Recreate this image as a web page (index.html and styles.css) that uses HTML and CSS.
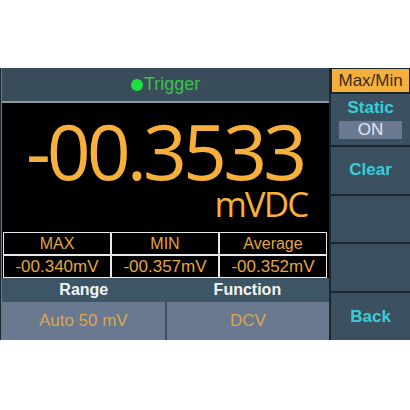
FILE: index.html
```html
<!DOCTYPE html>
<html>
<head>
<meta charset="utf-8">
<link rel="stylesheet" href="styles.css">
</head>
<body>
<div class="device">
  <div class="left">
    <div class="header"><span class="dot"></span><span class="trig">Trigger</span></div>
    <div class="display">
      <div class="reading">-00.3533</div>
      <div class="unit">mVDC</div>
    </div>
    <div class="stats">
      <div class="cell lbl">MAX</div>
      <div class="cell lbl">MIN</div>
      <div class="cell lbl">Average</div>
      <div class="cell val">-00.340mV</div>
      <div class="cell val">-00.357mV</div>
      <div class="cell val">-00.352mV</div>
    </div>
    <div class="fnhead">
      <div class="fcol">Range</div>
      <div class="fcol">Function</div>
    </div>
    <div class="fnvals">
      <div class="fval">Auto 50 mV</div>
      <div class="fval">DCV</div>
    </div>
  </div>
  <div class="right">
    <div class="title">Max/Min</div>
    <div class="panel static">
      <div class="ptext">Static</div>
      <div class="onbox">ON</div>
    </div>
    <div class="panel"><div class="ptext">Clear</div></div>
    <div class="panel"></div>
    <div class="panel"></div>
    <div class="panel"><div class="ptext">Back</div></div>
  </div>
</div>
</body>
</html>
```
FILE: styles.css
```css
html, body {
  margin: 0;
  padding: 0;
  background: #ffffff;
}
body {
  font-family: "Liberation Sans", Arial, sans-serif;
}
.device {
  margin-top: 68px;
  width: 410px;
  height: 272px;
  display: flex;
  background: #1b272f;
}
.left {
  width: 328px;
  margin-left: 1px;
  border-left: 1px solid #6f7a83;
  display: flex;
  flex-direction: column;
}
.header {
  height: 33px;
  background: #394c59;
  border-bottom: 2px solid #8c969e;
  display: flex;
  align-items: center;
  justify-content: center;
}
.dot {
  width: 12px;
  height: 12px;
  border-radius: 50%;
  background: #1fe040;
  margin-right: 1px;
}
.trig {
  color: #3cc050;
  font-size: 18px;
}
.display {
  height: 129px;
  background: #000000;
  display: flex;
  flex-direction: column;
  align-items: flex-end;
  padding-right: 22px;
  box-sizing: border-box;
  padding-top: 13px;
}
.reading {
  font-family: "Open Sans", sans-serif;
  font-size: 77px;
  line-height: 70px;
  color: #f6b03b;
  letter-spacing: -4px;
  margin-right: 4px;
}
.unit {
  font-family: "Open Sans", sans-serif;
  font-size: 35px;
  line-height: 32px;
  color: #f6b03b;
  letter-spacing: -2px;
  margin-top: 2px;
}
.stats {
  height: 46px;
  background: #000000;
  display: grid;
  grid-template-columns: 108px 108px 108px;
  grid-template-rows: 23px 23px;
  padding: 0 1px;
}
.cell {
  border: 1px solid #e8e8e8;
  display: flex;
  align-items: center;
  justify-content: center;
  color: #e3a73e;
}
.lbl {
  font-size: 16px;
}
.val {
  font-size: 17px;
}
.fnhead {
  height: 24px;
  background: #3d5564;
  display: flex;
}
.fcol {
  flex: 1;
  display: flex;
  align-items: center;
  justify-content: center;
  color: #f2f4f6;
  font-weight: bold;
  font-size: 16px;
}
.fnvals {
  height: 38px;
  background: #6a7890;
  display: flex;
}
.fval {
  flex: 1;
  display: flex;
  align-items: center;
  justify-content: center;
  color: #d8a84a;
  font-size: 17px;
}
.fval + .fval {
  border-left: 2px solid #3f4c5c;
}
.right {
  width: 79px;
  margin-left: 2px;
  display: flex;
  flex-direction: column;
  gap: 2px;
}
.title {
  height: 23px;
  margin: 1px 1px 0 1px;
  background: #f5b03c;
  color: #3a2c18;
  font-size: 17px;
  display: flex;
  align-items: center;
  justify-content: center;
}
.panel {
  flex: 1;
  background: #3b5060;
  display: flex;
  flex-direction: column;
  align-items: center;
  justify-content: center;
}
.ptext {
  color: #36cfd8;
  font-weight: bold;
  font-size: 17px;
}
.static {
  justify-content: flex-start;
  padding-top: 4px;
}
.static .ptext {
  line-height: 20px;
}
.onbox {
  margin-top: 3px;
  width: 63px;
  height: 18px;
  background: #6a7a93;
  color: #e4e6ea;
  font-size: 17px;
  display: flex;
  align-items: center;
  justify-content: center;
}
```
